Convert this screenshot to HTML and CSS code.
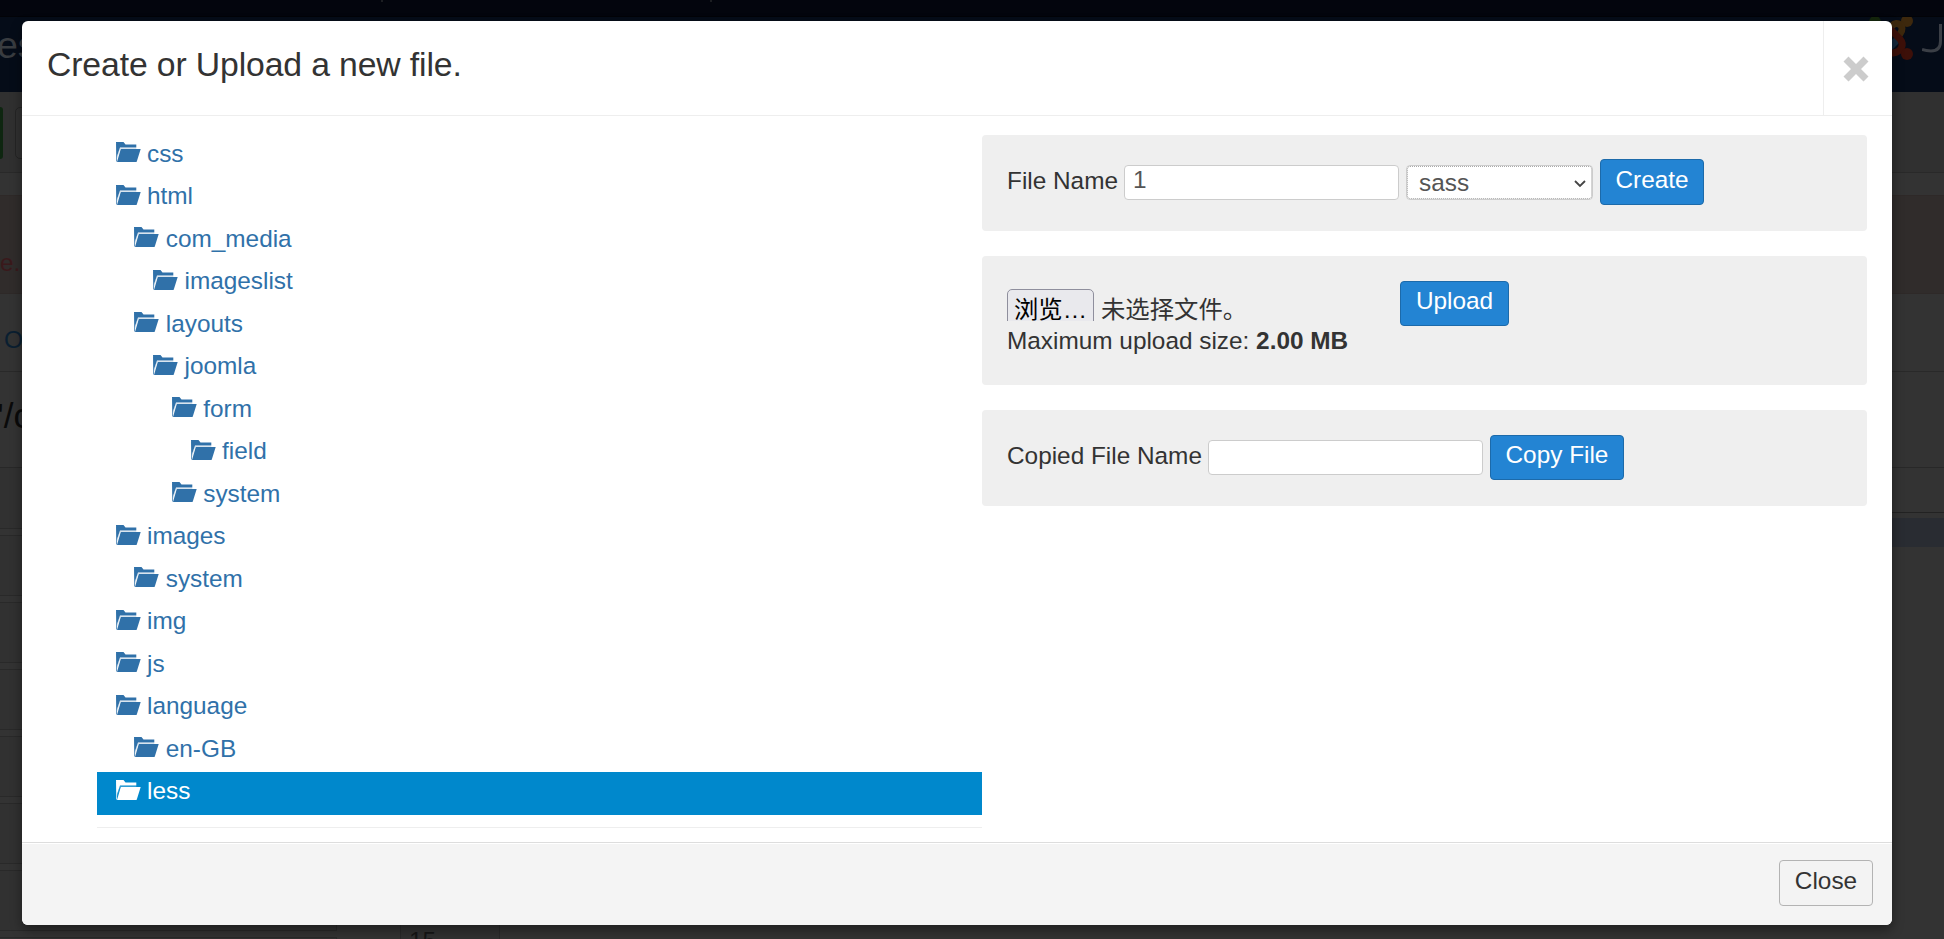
FILE: index.html
```
<!DOCTYPE html>
<html lang="en">
<head>
<meta charset="utf-8">
<title>Templates: Customise</title>
<link rel="stylesheet" href="styles.css">
</head>
<body>
<svg class="defs" width="0" height="0">
  <symbol id="folder" viewBox="0 0 25 20">
    <path d="M0 0H7.5L9.5 2.6H20.3V5.6H4L0.7 15Z"/>
    <path d="M4.8 7.1H24.7L20.6 20H1Z"/>
    <path d="M0 2H.7V19.5H0Z"/>
    <path d="M4 5.9H20.3V6.8H4.2L1 17L.8 15.2Z" opacity=".25"/>
  </symbol>
</svg>
<div class="page">
  <div class="navbar"><i class="tick"></i><i class="tick"></i></div>
  <div class="header"><span class="page-title">es</span>
    <div class="brand">
      <svg width="46" height="46" viewBox="0 0 46 46" fill="none" stroke-width="7" stroke-linecap="round"><circle cx="7" cy="5" r="6" fill="#14260c"/><circle cx="39" cy="4" r="6" fill="#3d280d"/><path d="M24 9C29 3 38 9 32 17" stroke="#3d280d"/><path d="M18 34L28 24" stroke="#14283c"/><path d="M24 14L32 22C37 28 33 35 25 36" stroke="#3d1009"/><circle cx="39" cy="37" r="6" fill="#3d1009"/></svg>
      <svg class="brand-j" width="30" height="32" viewBox="0 0 30 32" fill="none" stroke="#3b3f46" stroke-width="3"><path d="M18.500 1V18Q18.500 28 9 28Q4 28 0 26.500"/><path d="M30 12C22 14 22 25 30 27"/></svg>
    </div>
  </div>
  <div class="toolbar"><span class="tool-save"></span><span class="tool"></span></div>
  <div class="spacer"></div>
  <div class="alert"><span>e.</span></div>
  <div class="tabs"><span>O</span></div>
  <div class="path"><span>'/c</span></div>
  <div class="rows">
    <div class="row first"></div><div class="row"></div><div class="row"></div><div class="row"></div><div class="row"></div><div class="row"></div><div class="row"></div><div class="row"></div>
  </div>
  <div class="editor"><div class="editor-head"></div><div class="editor-active"></div><div class="gutter"><span>15</span></div></div>
</div>

<div class="modal">
  <div class="modal-header">
    <h3>Create or Upload a new file.</h3>
    <button class="dismiss" aria-label="Close"><svg width="26" height="26" viewBox="0 0 26 26"><path d="M5.500 0.500L13 8L20.500 .500L25.500 5.500L18 13L25.500 20.500L20.500 25.500L13 18L5.500 25.500L.500 20.500L8 13L.500 5.500Z" fill="#ccc"/></svg></button>
  </div>
  <div class="modal-body">
    <div class="tree-col">
      <ul class="tree">
        <li><a><svg><use href="#folder"/></svg>css</a></li>
        <li><a><svg><use href="#folder"/></svg>html</a>
          <ul>
            <li><a><svg><use href="#folder"/></svg>com_media</a>
              <ul><li><a><svg><use href="#folder"/></svg>imageslist</a></li></ul></li>
            <li><a><svg><use href="#folder"/></svg>layouts</a>
              <ul><li><a><svg><use href="#folder"/></svg>joomla</a>
                <ul><li><a><svg><use href="#folder"/></svg>form</a>
                  <ul><li><a><svg><use href="#folder"/></svg>field</a></li></ul></li>
                  <li><a><svg><use href="#folder"/></svg>system</a></li></ul></li></ul></li>
          </ul></li>
        <li><a><svg><use href="#folder"/></svg>images</a>
          <ul><li><a><svg><use href="#folder"/></svg>system</a></li></ul></li>
        <li><a><svg><use href="#folder"/></svg>img</a></li>
        <li><a><svg><use href="#folder"/></svg>js</a></li>
        <li><a><svg><use href="#folder"/></svg>language</a>
          <ul><li><a><svg><use href="#folder"/></svg>en-GB</a></li></ul></li>
        <li><a class="selected"><svg><use href="#folder"/></svg>less</a></li>
      </ul>
    </div>
    <div class="forms">
      <div class="well">
        <label>File Name</label><div class="input">1</div>
        <div class="select"><span>sass</span><svg width="12" height="8" viewBox="0 0 12 8" fill="none" stroke="#444" stroke-width="1.800"><path d="M1 1L6 6L11 1"/></svg></div>
        <button class="btn primary create">Create</button>
      </div>
      <div class="well upload">
        <div class="file-info">
          <div class="file"><span class="browse">浏览…</span><span>未选择文件。</span></div>
          <div class="limit">Maximum upload size: <strong>2.00 MB</strong></div>
        </div>
        <button class="btn primary upload-btn">Upload</button>
      </div>
      <div class="well copy">
        <label>Copied File Name</label><div class="input"></div>
        <button class="btn primary copy-btn">Copy File</button>
      </div>
    </div>
  </div>
  <div class="modal-footer"><button class="btn close-btn">Close</button></div>
</div>
</body>
</html>
```
FILE: styles.css
```
* { box-sizing: border-box; }
body {
  margin: 0;
  width: 1944px;
  height: 939px;
  overflow: hidden;
  position: relative;
  background: #333;
  color: #333;
  font: 24.375px/33.75px "Liberation Sans", "Noto Sans CJK SC", sans-serif;
}
.defs { position: absolute; }

/* dimmed page */
.page { display: flex; flex-direction: column; height: 939px; position: relative; overflow: hidden; }
.page > div { flex: none; }
.navbar { height: 17px; background: #03050d; border-bottom: 1px solid #020307; display: flex; gap: 327px; padding-left: 381px; }
.tick { width: 2px; height: 2px; background: #1c1e22; }
.header { height: 75px; background: #050c18; display: flex; justify-content: space-between; }
.page-title { color: #393c40; font-size: 37.500px; line-height: 56px; margin-left: -3px; }
.brand { display: flex; width: 76px; }
.brand svg { flex: none; }
.brand .brand-j { margin: 6px 0 0 8px; }
.toolbar { height: 81px; background: #303030; border-bottom: 1px solid #292929; display: flex; gap: 12px; padding-top: 15px; }
.tool-save { width: 3px; height: 52px; background: #0e2610; border-radius: 0 4px 4px 0; }
.tool { width: 90px; height: 52px; border: 1px solid #242424; border-radius: 5px; background: #313131; }
.spacer { height: 22px; }
.alert { height: 99px; background: #302c2b; border: solid #2e2928; border-width: 1px 0; color: #3a191b; padding-top: 50px; }
.tabs { height: 78px; border-bottom: 1px solid #292929; color: #0a1f31; padding: 29px 0 0 4px; }
.path { height: 96px; border-bottom: 1px solid #282828; color: #0a0a0a; font-size: 35px; padding: 27px 0 0; margin-left: -3px; }
.rows { width: 337px; display: flex; flex-direction: column; gap: 6px; }
.row { height: 61px; flex: none; background: #313131; border: 1px solid #292929; border-left: 0; }
.row.first { border-top: 0; }
.editor { position: absolute; left: 400px; right: 0; top: 512px; height: 427px; }
.editor-head { height: 6px; border-top: 1px solid #222; }
.editor-active { height: 29px; background: #292c32; }
.gutter { width: 100px; height: 392px; border: solid #292929; border-width: 0 1px; padding: 377px 0 0 8px; background: #313131; color: #161616; overflow: hidden; }

/* dialog */
.modal {
  position: absolute;
  left: 22px;
  top: 21px;
  width: 1870px;
  height: 904px;
  border-radius: 6px;
  background: #fff;
  box-shadow: 0 5px 12px rgba(0, 0, 0, .4);
  display: flex;
  flex-direction: column;
  overflow: hidden;
}
.modal-header { height: 95px; border-bottom: 1px solid #eee; display: flex; justify-content: space-between; flex: none; }
.modal-header h3 { margin: 0 0 0 25px; font-size: 33.750px; font-weight: 400; line-height: 86px; letter-spacing: -.13px; }
.dismiss { width: 69px; border: 0; border-left: 1px solid #eee; background: none; padding: 2px 5px 0 0; display: flex; align-items: center; justify-content: center; }
.modal-body { flex: 1; display: flex; padding-top: 17px; min-height: 0; }
.tree-col { width: 885px; height: 695px; margin-left: 75px; border-bottom: 1px solid #eee; padding-top: 1.500px; flex: none; }
.tree, .tree ul { list-style: none; margin: 0; padding: 0; }
.tree ul { margin-left: 18.750px; }
.tree a { display: flex; height: 42.530px; color: #3071a9; padding-left: 18.500px; line-height: 38px; }
.tree a svg { width: 25px; height: 20px; margin: 7.500px 6.500px 0 0; fill: currentColor; flex: none; }
.tree .selected { background: #08c; color: #fff; }
.forms { width: 885px; padding-top: 2px; flex: none; }
.well { height: 96px; background: #efefef; border-radius: 4px; margin-bottom: 25px; padding: 24px 25px 0; display: flex; align-items: flex-start; }
.well label { line-height: 43px; margin-right: 6px; }
.input { width: 275px; height: 35px; margin-top: 6px; border: 1px solid #ccc; border-radius: 4px; background: #fff; color: #555; padding-left: 8px; line-height: 27px; flex: none; }
.select { width: 187px; height: 35px; margin: 6px 7px 0; border: 1px solid #ccc; border-radius: 4px; background: #fff; color: #555; display: flex; justify-content: space-between; align-items: center; padding: 0 6px 0 12px; outline: 1px dotted #aaa; outline-offset: -2px; }
.select svg { margin-top: 2px; }
.btn { font: inherit; height: 46px; border: 1px solid #b3b3b3; border-radius: 4px; background: #f3f3f3; color: #333; padding: 0 0 4px; line-height: 36px; flex: none; }
.primary { background: #2384d3; border-color: #1c6aaa; color: #fff; }
.create { width: 104px; }
.well.upload { height: 129px; }
.file-info { width: 393px; padding-top: 9px; }
.file { height: 32px; overflow: hidden; display: flex; gap: 7px; line-height: 41px; }
.browse { width: 87px; height: 44px; border: 1px solid #8f8f9d; border-radius: 5px; background: #e9e9ed; color: #000; text-align: center; line-height: 39px; }
.limit { line-height: 39px; }
.upload-btn { width: 109px; height: 45px; margin-top: 1px; padding-bottom: 6px; }
.copy-btn { width: 134px; margin: 1px 0 0 7px; height: 45px; padding-bottom: 6px; }
.modal-footer { height: 83px; background: #f4f4f4; border-top: 1px solid #ddd; box-shadow: inset 0 1px 0 #fff; display: flex; justify-content: flex-end; padding: 17px 19px 0; flex: none; }
.close-btn { width: 94px; }
```
